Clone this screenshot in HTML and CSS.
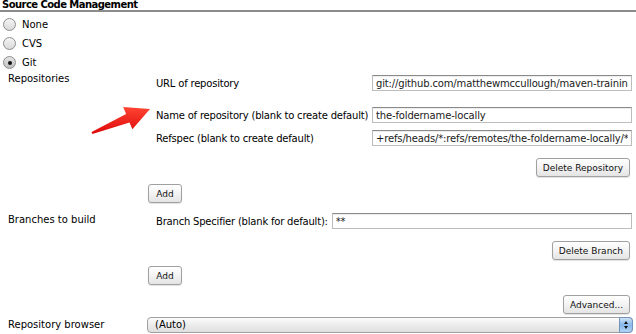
FILE: index.html
```html
<!DOCTYPE html>
<html lang="en">
<head>
  <meta charset="UTF-8" />
  <title>Source Code Management</title>
  <link rel="stylesheet" href="styles.css">
</head>
<body>
  <div class="section-title">Source Code Management</div>

  <div class="radios">
    <div class="radio-row"><span class="radio"></span>None</div>
    <div class="radio-row"><span class="radio"></span>CVS</div>
    <div class="radio-row"><span class="radio checked"></span>Git</div>
  </div>

  <div class="row">
    <div class="row-label">Repositories</div>
    <div class="row-body">
      <div class="repeated">
        <div class="field field-url">
          <span class="field-label">URL of repository</span>
          <input class="text" type="text" value="git://github.com/matthewmccullough/maven-training-example">
        </div>
        <div class="field field-name">
          <span class="field-label">Name of repository (blank to create default)</span>
          <input class="text" type="text" value="the-foldername-locally">
        </div>
        <div class="field field-refspec">
          <span class="field-label">Refspec (blank to create default)</span>
          <input class="text" type="text" value="+refs/heads/*:refs/remotes/the-foldername-locally/*">
        </div>
        <div class="actions"><button class="btn">Delete Repository</button></div>
      </div>
      <button class="btn btn-add add-repo">Add</button>
    </div>
  </div>

  <div class="row row-branches">
    <div class="row-label">Branches to build</div>
    <div class="row-body">
      <div class="repeated">
        <div class="field field-branch">
          <span class="field-label">Branch Specifier (blank for default):</span>
          <input class="text" type="text" value="**">
        </div>
        <div class="actions actions-branch"><button class="btn">Delete Branch</button></div>
      </div>
      <button class="btn btn-add add-branch">Add</button>
    </div>
  </div>

  <div class="advanced"><button class="btn">Advanced...</button></div>

  <div class="row row-browser">
    <div class="row-label">Repository browser</div>
    <div class="row-body">
      <div class="select">(Auto)<span class="select-arrows"></span></div>
    </div>
  </div>

  <!-- annotation arrow drawn over the form -->
  <svg class="arrow" width="68" height="34" viewBox="0 0 68 34">
    <defs>
      <linearGradient id="red" x1="0" y1="0" x2="0" y2="1">
        <stop offset="0" stop-color="#ff4433"/>
        <stop offset="1" stop-color="#dd0a0a"/>
      </linearGradient>
    </defs>
    <polygon points="64,5 37.2,3.1 40.1,10 5.6,28.1 6.4,29.9 43.5,18.4 46.4,25.3" fill="url(#red)"/>
  </svg>
</body>
</html>
```

FILE: styles.css
```css
body {
  margin: 0;
  width: 636px;
  height: 334px;
  overflow: hidden;
  position: relative;
  background: #fff;
  font-family: "DejaVu Sans", Verdana, sans-serif;
  font-size: 10px;
  color: #000;
}
.section-title {
  font-weight: bold;
  letter-spacing: -0.55px;
  padding-left: 2px;
  line-height: 10px;
  height: 10px;
  border-bottom: 2px solid #8c8c8c;
}
.radios {
  margin-top: 3px;
}
.radio-row {
  display: flex;
  align-items: center;
  height: 19px;
  padding-left: 3px;
}
.radio {
  width: 11px;
  height: 11px;
  border-radius: 50%;
  border: 1px solid #8d8d8d;
  background: linear-gradient(#f4f4f4, #d9d9d9);
  margin-right: 6px;
  position: relative;
}
.radio.checked {
  background: linear-gradient(#e6e6e6, #bdbdbd);
}
.radio.checked::after {
  content: "";
  position: absolute;
  left: 4px;
  top: 4px;
  width: 4px;
  height: 4px;
  border-radius: 50%;
  background: #111;
}
.row {
  display: flex;
}
.row-label {
  width: 140px;
  padding-left: 8px;
  padding-top: 1px;
  line-height: 12px;
  flex-shrink: 0;
}
.row-body {
  flex: 1;
  padding-right: 4px;
}
.repeated {
  padding-left: 8px;
}
.field {
  display: flex;
  align-items: center;
  height: 16px;
}
.field-label {
  width: 216px;
  flex-shrink: 0;
  white-space: nowrap;
  letter-spacing: -0.2px;
}
.field-url { margin-top: 3px; }
.field-name { margin-top: 16px; }
.field-refspec { margin-top: 7px; }
.text {
  flex: 1;
  min-width: 0;
  height: 16px;
  box-sizing: border-box;
  border: 1px solid #bdbdbd;
  border-top-color: #8a8a8a;
  box-shadow: inset 0 1px 1px rgba(0, 0, 0, 0.08);
  padding: 0 3px;
  font: 10px "DejaVu Sans", Verdana, sans-serif;
  letter-spacing: -0.15px;
  color: #1a1a1a;
  margin: 0;
}
.field-branch .field-label {
  width: auto;
  margin-right: 4px;
}
.field-branch {
  margin-top: 0;
}
.actions {
  display: flex;
  justify-content: flex-end;
  padding-right: 2px;
  margin-top: 12px;
}
.actions-branch {
  margin-top: 12px;
}
.btn {
  font: 9px "DejaVu Sans", Verdana, sans-serif;
  color: #111;
  height: 19px;
  padding: 0 6px;
  border: 1px solid #a0a0a0;
  border-radius: 3px;
  background: linear-gradient(#ffffff, #f3f3f3 50%, #e4e4e4);
  box-shadow: 0 1px 1px rgba(0, 0, 0, 0.12);
  display: block;
}
.btn-add {
  width: 34px;
  padding: 0;
}
.add-repo {
  margin-top: 7px;
}
.add-branch {
  margin-top: 6px;
}
.row-branches {
  margin-top: 10px;
}
.advanced {
  display: flex;
  justify-content: flex-end;
  padding-right: 6px;
  margin-top: 10px;
}
.row-browser {
  align-items: center;
  height: 16px;
  margin-top: 3px;
}
.row-browser .row-label {
  padding-top: 0;
}
.select {
  position: relative;
  margin: 0 -1px;
  height: 16px;
  line-height: 14px;
  box-sizing: border-box;
  border: 1px solid #a0a0a0;
  border-radius: 4px;
  padding-left: 7px;
  background: linear-gradient(#fcfcfc, #ececec 50%, #dfdfdf);
}
.select-arrows {
  position: absolute;
  right: -1px;
  top: -1px;
  width: 14px;
  height: 16px;
  border-radius: 0 4px 4px 0;
  background: linear-gradient(#cfe3f6, #86b6e9 50%, #b3d3f3);
  border: 1px solid #7394ba;
  box-sizing: border-box;
}
.select-arrows::before,
.select-arrows::after {
  content: "";
  position: absolute;
  left: 4px;
  border-left: 2px solid transparent;
  border-right: 2px solid transparent;
}
.select-arrows::before {
  top: 3px;
  border-bottom: 3px solid #111;
}
.select-arrows::after {
  top: 8px;
  border-top: 3px solid #111;
}
.arrow {
  position: absolute;
  left: 86px;
  top: 104px;
}
```
